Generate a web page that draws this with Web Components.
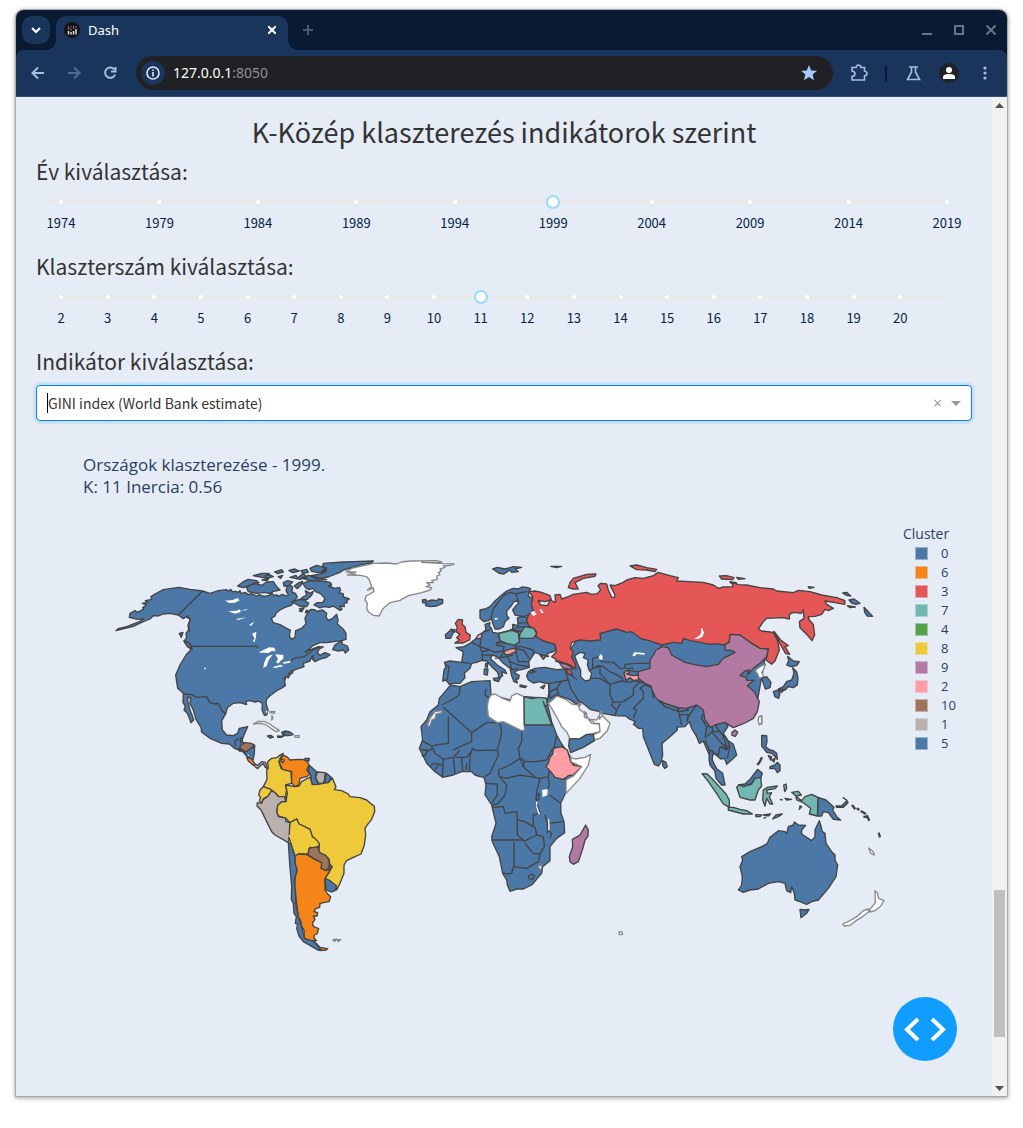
<!DOCTYPE html>
<html lang="hu">
<head>
<meta charset="utf-8">
<meta name="viewport" content="width=device-width, initial-scale=1">
<title>Dash</title>
<style>
  html { background: #fff; }
  body { margin: 0; font-family: "Noto Sans", "Open Sans", sans-serif; }
</style>
</head>
<body>
<browser-window>
  <browser-tabs slot="tabs"></browser-tabs>
  <browser-toolbar slot="toolbar"></browser-toolbar>
  <cluster-page>
    <mark-slider caption="Év kiválasztása:" min="1974" max="2019" value="1999" step="5" last="2019"></mark-slider>
    <mark-slider caption="Klaszterszám kiválasztása:" min="2" max="21" value="11" step="1" last="20"></mark-slider>
    <indicator-picker></indicator-picker>
    <cluster-figure>
      <world-map></world-map>
      <cluster-legend slot="legend"></cluster-legend>
    </cluster-figure>
  </cluster-page>
</browser-window>

<script>
const base = ':host,*{box-sizing:border-box}button{border:0;margin:0;padding:0;background:none;color:inherit;font:inherit;display:grid;place-items:center}svg{display:block}';
function define(name, html, setup) {
  customElements.define(name, class extends HTMLElement {
    constructor() {
      super();
      this.attachShadow({ mode: 'open' }).innerHTML = html.replace('<style>', '<style>' + base);
    }
    connectedCallback() { if (setup && !this.ready) { this.ready = true; setup(this, this.shadowRoot); } }
  });
}

define('browser-window', `<style>
  :host{display:block;padding:10px 16px 32px 16px}
  .frame{display:flex;flex-direction:column;min-height:calc(100vh - 42px);border-radius:8px 8px 0 0;overflow:hidden;background:#0a1a33}
  .shadow{border-radius:8px 8px 0 0;box-shadow:0 0 0 1px #aaa,0 1px 4px 1px #0006}
  .view{display:flex;flex:1;background:#e5ecf6;position:relative}
  .doc{flex:1;min-width:0}
  .bar{width:15px;background:#f1f1f1;display:flex;flex-direction:column;align-items:center}
  .bar button{width:15px;height:16px}
  .before{flex:777}.thumb{flex:147;width:11px;background:#c1c1c1}.after{flex:43}
  .dev{position:absolute;right:50px;bottom:35px;width:64px;height:64px;border-radius:50%;background:#119dff}
</style>
<div class="shadow"><div class="frame"><slot name="tabs"></slot><slot name="toolbar"></slot>
<div class="view"><div class="doc"><slot></slot></div>
<div class="bar"><button aria-label="Fel"><svg width="9" height="5"><path d="M0 5L4.500 0L9 5z" fill="#505050"/></svg></button><div class="before"></div><div class="thumb"></div><div class="after"></div><button aria-label="Le"><svg width="9" height="5"><path d="M0 0L4.500 5L9 0z" fill="#505050"/></svg></button></div>
<button class="dev" aria-label="Fejlesztői eszközök"><svg width="64" height="64" fill="none" stroke="#fff" stroke-width="4"><path d="M25 22L14 32.500L25 43M39 22L50 32.500L39 43"/></svg></button>
</div></div></div>`);

define('browser-tabs', `<style>
  :host{display:flex;height:40px;padding:6px 0 0 6px;color:#fff}
  .search{width:28px;height:28px;border-radius:10px;background:#1a355c}
  .tab{position:relative;display:flex;align-items:center;gap:8px;width:232px;margin-left:6px;padding:0 8px 6px;height:34px;border-radius:10px 10px 0 0;background:#1a355c;font-size:13px;line-height:18px}
  .tab span{flex:1}
  .tab::before,.tab::after{content:"";position:absolute;bottom:0;width:10px;height:10px}
  .tab::before{left:-10px;background:radial-gradient(circle at 0 0,#0000 10px,#1a355c 10px)}
  .tab::after{right:-10px;background:radial-gradient(circle at 100% 0,#0000 10px,#1a355c 10px)}
  .tab button{width:16px;height:16px}
  .new{width:28px;height:28px;margin-left:6px}
  .win{margin-left:auto;display:flex}
  .win button{width:32px;height:28px}
</style>
<button class="search" aria-label="Lapok keresése"><svg width="10" height="8" fill="none" stroke="#fff" stroke-width="2"><path d="M1 2L5 6L9 2"/></svg></button>
<div class="tab"><svg width="16" height="16"><circle cx="8" cy="8" r="8" fill="#111518"/><path d="M4.500 9v3.500M7 10v2.500M9.500 9v3.500M12 7v5.500" stroke="#ddd" stroke-width="1.500"/><path d="M4.500 4v4M7 4v1M9.500 4v1M12 4v2" stroke="#a55a78" stroke-width="1.200"/><path d="M7 6v3M9.500 5v2" stroke="#777"/></svg><span>Dash</span><button aria-label="Lap bezárása"><svg width="8" height="8" stroke="#fff" stroke-width="2"><path d="M0 0L8 8M8 0L0 8"/></svg></button></div>
<button class="new" aria-label="Új lap"><svg width="10" height="10" stroke="#4b5a72" stroke-width="2"><path d="M5 0V10M0 5H10"/></svg></button>
<div class="win"><button aria-label="Kis méret"><svg width="10" height="10" stroke="#6b7485" stroke-width="2"><path d="M0 9H10"/></svg></button><button aria-label="Teljes méret"><svg width="10" height="10" fill="none" stroke="#6b7485" stroke-width="2"><path d="M1 1H9V9H1z"/></svg></button><button aria-label="Bezárás"><svg width="10" height="10" stroke="#6b7485" stroke-width="2"><path d="M.5 .5L9.500 9.500M9.500 .5L.5 9.500"/></svg></button></div>`);

define('browser-toolbar', `<style>
  :host{display:flex;align-items:center;height:47px;background:#1a355c;border-bottom:1px solid #35507a;border-radius:8px 8px 0 0;color:#a8bde0;padding:0 4px}
  button{width:36px;height:34px}
  .off{color:#4f6a94}
  .omni{flex:1;display:flex;align-items:center;height:34px;margin-left:8px;border-radius:17px;background:#202124;padding:0 6px 0 5px;font-size:14px}
  .omni .info{flex:none;width:24px;height:24px;border-radius:50%;background:#1a355c;color:#e3eaf6}
  .omni .star{color:#a8c7fa}
  .url{flex:1;margin-left:8px;line-height:20px;color:#8f9194}
  .url b{font-weight:400;color:#fff}
  .sep{width:2px;height:16px;margin:0 8px;background:#0a1a33}
  .ext{margin-left:8px}
  .avatar{width:20px;height:20px;border-radius:50%;background:#202124;margin:0 8px}
</style>
<button aria-label="Vissza"><svg width="14" height="14" fill="none" stroke="currentColor" stroke-width="2"><path d="M13 7H2M7 1.500L1.500 7L7 12.500"/></svg></button>
<button class="off" aria-label="Előre"><svg width="14" height="14" fill="none" stroke="currentColor" stroke-width="2"><path d="M1 7H12M7 1.500L12.500 7L7 12.500"/></svg></button>
<button aria-label="Újratöltés"><svg width="14" height="14" fill="none" stroke="currentColor" stroke-width="2"><path d="M11.500 3.500A5.200 5.200 0 1 0 12.200 8.500M12.500 1V5.500H8"/></svg></button>
<div class="omni"><button class="info" aria-label="Webhelyadatok"><svg width="14" height="14" fill="none" stroke="currentColor" stroke-width="1.600"><circle cx="7" cy="7" r="6"/><path d="M7 6V10.500M7 3.400V5"/></svg></button>
<div class="url"><b>127.0.0.1</b>:8050</div>
<button class="star" aria-label="Könyvjelző"><svg width="16" height="16" fill="currentColor"><path d="M8 0L10.200 5.400L16 5.800L11.600 9.500L13 15.200L8 12.100L3 15.200L4.400 9.500L0 5.800L5.800 5.400z"/></svg></button></div>
<button class="ext" aria-label="Bővítmények"><svg width="18" height="18" fill="none" stroke="currentColor" stroke-width="1.600"><path d="M2 3.500H6Q6.500 1 8.500 1T11 3.500H14.500V7Q17 7.500 17 9.500T14.500 12V16H2V12.500Q5 12 5 9.700T2 7z"/></svg></button>
<div class="sep"></div>
<button aria-label="Kísérletek"><svg width="15" height="15" fill="none" stroke="currentColor" stroke-width="1.600"><path d="M3 1H12M5.500 1V6L1.500 13.500H13.500L9.500 6V1"/></svg></button>
<button class="avatar" aria-label="Profil"><svg width="14" height="14" fill="#fff"><circle cx="7" cy="4" r="3"/><path d="M1 13V11Q1 8 7 8T13 11V13z"/></svg></button>
<button aria-label="Menü"><svg width="4" height="16" fill="currentColor"><circle cx="2" cy="3" r="1.600"/><circle cx="2" cy="8" r="1.600"/><circle cx="2" cy="13" r="1.600"/></svg></button>`);

define('cluster-page', `<style>
  :host{display:block;padding:14px 20px 20px;color:#333;font-family:"Noto Sans CJK SC",sans-serif}
  h1{margin:0 0 4px;font-size:27px;line-height:42px;font-weight:400;text-align:center}
</style><h1>K-Közép klaszterezés indikátorok szerint</h1><slot></slot>`);

define('mark-slider', `<style>
  :host{display:block;height:95px}
  label{display:block;margin-bottom:4px;font-size:21px;line-height:28px}
  .track{position:relative;height:26px;padding:0 18px}
  .rail{position:absolute;left:14px;right:25px;top:11px;height:4px;border-radius:2px;background:#e9e9e9}
  .dots{position:absolute;left:25px;right:25px;top:11px;display:flex;justify-content:space-between}
  .dots i{width:0;display:flex;justify-content:center}
  .dots i::before{content:"";flex:none;width:4px;height:4px;border-radius:50%;background:#fff}
  .dots i.none::before{background:none}
  input{position:relative;appearance:none;display:block;width:100%;height:26px;margin:0;background:none}
  input::-webkit-slider-runnable-track{height:14px;background:none}
  input::-webkit-slider-thumb{appearance:none;width:14px;height:14px;border-radius:50%;border:2px solid #96dbfa;background:#fff}
  .marks{display:flex;justify-content:space-between;padding:0 25px;font-size:13px;line-height:16px;color:#061e44}
  .marks span{width:0;display:flex;justify-content:center}
</style><label for="range"></label><div class="track"><div class="rail"></div><div class="dots"></div><input id="range" type="range"></div><div class="marks"></div>`,
(el, root) => {
  const get = n => Number(el.getAttribute(n));
  const input = root.querySelector('input');
  root.querySelector('label').textContent = el.getAttribute('caption');
  input.min = get('min'); input.max = get('max'); input.value = get('value');
  for (let v = get('min'); v <= get('max'); v += get('step')) {
    const dot = document.createElement('i'), mark = document.createElement('span');
    if (v <= get('last')) mark.textContent = v; else dot.className = 'none';
    root.querySelector('.dots').append(dot);
    root.querySelector('.marks').append(mark);
  }
});

define('indicator-picker', `<style>
  :host{display:block}
  label{display:block;font-size:21px;line-height:28px;margin-bottom:10px}
  .box{display:flex;align-items:center;height:36px;padding:0 10px;border:1px solid #007eff;border-radius:4px;background:#fff;box-shadow:0 0 0 3px #007eff1a}
  .caret{width:1px;height:20px;background:#000}
  select{appearance:none;flex:1;min-width:0;height:34px;border:0;padding:0;margin:0;background:none;color:#333;font:14px/34px "Noto Sans CJK SC",sans-serif;outline:0}
  button{width:17px;height:20px;margin-right:5px;color:#999;font:16px/20px "Open Sans",sans-serif}
</style><label for="ind">Indikátor kiválasztása:</label>
<div class="box"><span class="caret"></span><select id="ind"><option>GINI index (World Bank estimate)</option></select><button aria-label="Törlés">×</button><svg width="10" height="5"><path d="M0 0H10L5 5z" fill="#999"/></svg></div>`);

define('cluster-figure', `<style>
  :host{display:block;padding:33px 0 0 47px;color:#2a3f5f;font-family:"Open Sans",sans-serif}
  h2{margin:0 0 26px;font-size:17px;line-height:22px;font-weight:400}
  .plot{display:flex;gap:10px;align-items:flex-start}
  .map{flex:1;min-width:0}
</style><h2>Országok klaszterezése - 1999.<br>K: 11 Inercia: 0.56</h2><div class="plot"><div class="map"><slot></slot></div><slot name="legend"></slot></div>`);

define('cluster-legend', `<style>
  :host{display:block;width:69px;font-family:"Open Sans",sans-serif}
  h3{margin:0;font-size:14px;line-height:20px;font-weight:400}
  ul{margin:0;padding:0 0 0 12px;list-style:none;font-size:13px;line-height:19px}
  li{display:flex;align-items:center;gap:13px}
  i{width:13px;height:13px;border:1px solid #e5ecf680}
</style><h3>Cluster</h3><ul></ul>`,
(el, root) => {
  root.querySelector('ul').innerHTML = [[0,'#4c78a8'],[6,'#f58518'],[3,'#e45756'],[7,'#72b7b2'],[4,'#54a24b'],[8,'#eeca3b'],[9,'#b279a2'],[2,'#ff9da6'],[10,'#9d755d'],[1,'#bab0ac'],[5,'#4c78a8']]
    .map(([n, c]) => `<li><i style="background:${c}"></i>${n}</li>`).join('');
});

define('world-map', `<style>
  :host{display:block}
  svg{width:100%;height:auto}
  path{stroke:#444;stroke-width:4;stroke-linejoin:round}
  .b{fill:#4c78a8}.o{fill:#f58518}.r{fill:#e45756}.t{fill:#72b7b2}.g{fill:#54a24b}.y{fill:#eeca3b}.p{fill:#b279a2}.k{fill:#ff9da6}.n{fill:#9d755d}.s{fill:#bab0ac}
  .w{fill:#fff;stroke:#888}.l{fill:none}.m{fill:none;stroke-width:7}.lake{fill:#fff;stroke:none}.sea{fill:#e5ecf6}
</style>
<svg viewBox="249 1572 2430 1320" role="img" aria-label="Országok klaszterei">
<g transform="translate(330 1650)">
<path class="b" d="M207 112L240 118 278 123 300 130 325 122 350 119 356 124 362 118 367 125 376 124 385 127 390 122 393 131 405 127 415 134 423 131 440 138 447 134 462 139 478 136 485 129 492 137 500 134 505 139 517 133 530 138 535 135 528 122 532 108 540 104 548 112 545 126 556 130 562 141 556 148 545 165 525 172 510 180 498 190 495 198 484 205 490 218 510 224 530 235 541 240 538 258 545 268 555 262 557 242 575 235 588 222 585 205 592 190 602 178 613 179 620 184 638 180 650 190 648 202 656 211 668 205 680 193 684 210 682 222 700 238 708 250 708 268 695 272 650 278 630 278 610 286 600 295 585 307 602 299 625 290 640 291 628 297 622 308 630 316 645 308 660 314 650 322 628 328 615 335 607 327 611 317 605 320 600 333 580 340 582 350 565 356 550 361 548 368 540 374 535 384 528 378 524 394 526 407 516 414 500 422 480 437 470 447 468 460 474 480 470 495 463 496 456 480 457 460 445 453 435 456 420 452 408 454 410 464 390 458 370 460 352 473 347 492 335 512 337 540 350 555 370 557 383 550 388 535 413 530 405 548 400 560 395 576 410 581 430 583 433 595 430 610 424 624 408 614 397 603 375 596 358 582 335 580 300 565 275 547 273 532 258 508 250 480 240 460 242 444 232 442 234 455 240 480 247 498 251 510 243 518 237 502 232 490 222 480 226 468 219 458 220 430 203 415 197 375 210 345 228 315 242 300 240 291 228 282 222 275 230 262 228 250 236 240 234 225 241 208 228 200 220 206 205 195 180 190 160 192 145 198 130 197 120 207 105 213 70 229 18 242 24 236 50 230 90 214 101 206 82 208 58 202 60 190 75 182 82 187 100 178 98 173 110 165 97 160 113 157 106 152 125 148 123 140 135 132 160 119z"/>
<path class="l" d="M278 123L205 195M245 289H438M438 289L445 292M540 337L550 325 582 320 606 302 630 290M220 432L245 434 260 442 290 440 300 458 315 462 325 460 335 480 347 492M232 196L240 208 236 230 240 245M387 566L375 572 376 590M397 603L408 614M223 272L238 280 246 295M520 387L528 382M533 375L548 360"/>
<path class="b" d="M383 108L400 95 415 88 440 92 447 98 425 104 400 113zM410 113L432 99 455 106 470 96 490 95 500 110 510 120 490 124 480 131 465 127 440 130 415 125zM430 77L455 70 477 70 465 78 478 74 490 80 472 84 455 82zM494 66L515 59 520 66 503 71zM456 90L477 85 470 92zM537 61L555 57 568 63 548 68zM573 62L590 58 595 67 578 70zM540 82L558 76 563 84 580 70 590 82 570 88zM505 80L518 76 512 85zM520 98L533 92 548 96 535 108 522 108zM567 98L578 94 573 105 562 116 553 108zM575 84L595 76 650 89 600 92zM600 55L620 46 634 50 650 54 637 62 650 65 625 68 605 64zM637 51L640 40 700 36 730 35 790 33 785 39 755 44 725 53 700 60 690 67 655 81 620 86 600 78 640 70 637 62 650 59zM578 100L600 92 650 95 662 98 665 105 655 108 675 115 688 112 692 120 687 128 700 132 700 141 718 147 710 152 712 158 702 160 703 170 690 168 696 178 690 181 670 168 658 172 640 170 630 174 612 165 620 158 638 158 645 146 633 132 617 125 608 115 597 119 587 114zM545 156L562 150 578 146 596 160 590 170 568 168 560 163zM586 122L600 130 610 124 605 136 592 148 568 150 580 140 590 136zM575 178L568 183 576 185zM590 180L597 184 586 188zM568 176L583 173 578 180zM668 299L675 285 695 272 697 282 712 288 716 300 706 309 700 300 685 303zM208 250L219 247 214 262zM222 272L238 279 246 298 232 290z"/>
<path class="lake" d="M345 152L368 150 382 144 389 151 375 158 358 159zM355 184L380 182 390 178 392 186 375 191zM392 182L414 176 408 181zM378 207L410 202 385 210zM417 225L434 214 424 227zM426 252L439 245 438 260 434 276 428 274 434 265zM446 307L460 300 478 292 493 293 497 304 485 303 475 309 455 308zM488 314L476 330 470 348 460 354 462 340 470 322 480 316zM496 313L520 315 520 326 512 332 506 340 498 338 504 327zM487 352L512 344 520 349 495 354zM518 337L543 332 540 338 522 341zM283 353h5v5h-5zM468 482h4v6h-4z"/>
<path class="w" d="M430 522L445 514 465 515 480 522 490 530 508 542 498 545 483 535 468 524 450 520zM480 484L495 485 492 490 480 488zM486 497L485 510 489 504zM555 557L568 557 567 562 555 562z"/>
<path class="b" d="M472 558L482 556 490 561 480 564zM503 558L520 559 515 547 526 543 540 546 550 554 535 557 523 556 515 562 503 562zM523 544L526 557"/>
</g>
<g transform="translate(750 1650)">
<path class="w" d="M288 65L298 60 305 55 340 47 355 44 370 40 410 39 440 42 455 36 480 33 560 32 575 36 560 38 515 37 580 41 612 42 600 46 580 48 585 52 570 57 575 62 565 68 570 74 560 78 562 88 545 92 550 98 530 98 540 105 528 110 545 113 540 120 515 128 475 137 450 151 420 158 405 170 395 182 388 198 370 196 355 185 350 175 352 160 345 150 348 138 360 132 372 124 370 114 352 120 365 110 358 90 350 80 330 76 292 75 318 73 294 68 318 66z"/>
<path class="b" d="M517 150L527 148 530 155 545 150 560 152 566 147 578 149 578 160 560 168 540 170 527 167 528 160 518 158z"/>
</g>
<g transform="translate(675 2070)">
<path class="g" d="M47 145L52 142 52 152 46 158zM38 177L50 181 45 185z"/>
<path class="n" d="M48 165L60 158 78 160 89 166 75 178 60 186 52 178 44 175z"/>
<path class="b" d="M89 167L88 190 84 210 76 206 65 198 56 187 66 184 75 177z"/><path class="o" d="M65 201L80 207 90 222 85 226 70 213z"/>
<path class="s" d="M90 222L98 226 110 215 122 217 127 235 121 232 115 221 105 228 98 236 86 226z"/>
<path class="y" d="M128 215L140 205 155 203 165 195 175 190 166 203 162 215 168 235 198 245 200 280 182 285 185 300 182 315 183 333 160 318 140 300 115 290 126 268 125 240 130 235z"/>
<path class="y" d="M115 290L138 298 140 305 128 320 115 326 110 340 103 332 107 322 101 315 105 300z"/>
<path class="o" d="M166 208L175 195 188 202 195 210 220 208 243 209 252 225 245 240 255 252 245 260 225 265 222 285 208 290 200 278 200 245 172 238 162 215z"/>
<path class="s" d="M170 207L177 210 174 218 168 214z"/><path class="b" d="M240 205L253 205 252 213 240 212zM252 225L275 245 271 262 280 283 264 284 257 275 259 260 250 242z"/>
<path class="s" d="M278 246L300 248 299 268 295 280 280 279 272 262z"/><path class="b" d="M303 249L319 262 310 278 299 278z"/>
<path class="y" d="M182 285L208 290 222 288 230 275 255 261 262 284 280 283 295 280 310 278 322 264 333 290 328 299 350 302 370 312 375 320 405 323 425 330 440 343 448 348 449 365 440 388 425 407 420 415 422 435 418 465 408 492 385 502 365 512 357 525 357 550 345 580 335 600 328 585 315 575 300 566 310 550 320 532 314 520 312 508 300 496 286 490 282 482 283 462 270 458 262 440 255 418 235 408 222 402 215 387 195 398 182 385 160 378 155 365 158 345 170 335 183 335 187 310z"/>
<path class="s" d="M140 302L150 308 160 320 178 320 183 335 170 335 158 345 155 365 160 380 182 384 182 394 195 398 197 420 190 458 150 435 140 425 125 395 108 360 96 348 97 338 110 340 115 328 128 320z"/>
<path class="y" d="M195 398L215 387 222 402 235 408 255 418 262 440 270 445 283 460 280 475 255 472 248 492 220 492 210 498 203 478 196 455 192 442z"/>
<path class="o" d="M220 492L245 494 265 505 290 518 290 535 312 540 316 526 322 530 300 565 300 600 308 612 317 620 312 635 285 640 284 652 272 656 267 665 278 668 276 678 265 678 270 688 262 700 266 710 281 716 276 732 268 735 267 744 275 752 250 752 238 745 237 720 230 710 228 695 220 680 215 640 208 590 211 560 216 540 210 520 210 498z"/>
<path class="n" d="M252 475L278 470 284 488 302 496 312 510 313 530 304 542 288 535 290 518 265 505 250 495z"/>
<path class="b" d="M190 458L198 462 203 480 210 500 210 520 216 540 208 570 212 610 212 640 220 680 230 710 238 745 268 755 290 782 278 780 255 766 235 755 222 738 215 715 218 702 211 700 214 680 207 670 205 640 199 628 200 590 194 520z"/>
<path class="b" d="M300 565L315 572 335 588 330 602 318 606 303 600z"/><path class="o" d="M268 754L285 772 308 776 302 781 288 780z"/>
<path class="w" d="M323 750L334 747 330 754zM336 749L347 749 340 755z"/>
<path class="lake" d="M189 434L197 438 194 442zM68 193L73 198 69 198z"/>
</g>
<g transform="translate(1770 1665)">
<path class="b" d="M-185 350L-165 340 -135 337 -100 344 -72 342 -60 335 -95 318 -50 320 -60 285 -40 255 0 250 80 215 215 260 420 235 530 282 500 450 430 515 405 502 414 515 400 535 412 555 430 568 440 600 428 612 410 628 404 610 392 612 372 595 365 603 370 630 360 630 358 600 345 570 340 558 328 565 320 545 305 520 298 500 285 515 262 516 262 525 240 545 222 560 216 566 218 600 213 622 205 633 193 628 178 590 160 545 158 520 145 520 130 508 136 500 115 490 108 483 75 482 38 475 22 468 0 463 -12 452 -28 440 -40 448 -60 434 -100 420 -112 443 -127 448 -128 440 -123 410 -123 385 -137 384 -150 380 -170 384 -185 375 -190 362z"/>
<path class="l" d="M-123 385L-65 375M-125 383L-120 430M-65 375L-58 400 -48 415 -30 445M-123 412L-100 400 -85 378M-120 430L-95 415 -100 400M-65 375L-75 345M-65 355L-38 375M-5 370L30 370 60 388 60 420 70 442 65 450 80 465 75 482M60 388L95 378 120 382 130 378 150 380 185 395M60 388L30 355 30 335 8 340 8 310 28 305 35 320 70 322 90 340 105 340 105 328 140 325 180 325M0 345L25 332 40 335 60 350 85 362 100 372M70 442L100 440 130 420 130 400 150 380M80 465L92 445M130 490L140 465 130 460 160 430 160 410 150 400 165 390 185 398 190 430M205 436L225 455 265 470 262 458 225 445zM265 458L268 480 295 478 290 500M268 480L275 510M290 500L298 480 320 450M340 475L335 490 350 515 345 550M268 470L295 465 288 460M350 515L365 515 370 530 390 530 400 545 412 580 390 575 385 600 360 590 345 555M365 515L375 505M375 508L385 525 410 550 420 575 412 610M350 545L365 530 390 560 412 580M390 575L410 585 418 570M110 340L130 340M112 345L135 350 145 350"/>
<path class="k" d="M102 354L112 346 118 352 110 357 128 362 145 360 151 374 130 376 120 368 108 376z"/>
<path class="lake" d="M127 302L133 292 165 294 163 299 140 297 134 304zM26 305L33 297 38 305 37 315 28 313z"/>
<path class="sea" d="M-46 302L-30 292 -14 296 -20 308 -5 315 -8 328 -3 345 5 355 0 375 -15 378 -28 365 -28 345 -38 325z"/>
</g>
<g transform="translate(1230 1665)">
<path class="b" d="M210 165L225 162 240 155 255 138 275 120 290 108 310 100 325 102 335 96 350 97 362 101 357 110 355 125 368 128 365 150 372 165 362 178 340 185 315 180 308 165 318 152 326 145 322 138 312 140 302 155 290 168 290 180 297 190 285 200 280 215 268 222 255 222 248 205 244 188 238 196 222 200 210 190zM322 190L330 185 352 187 352 200 358 214 345 220 340 230 322 228 308 220 308 208 325 212zM228 225L225 208 240 203 238 212 245 222 248 232 265 235 305 225 330 235 380 235 380 245 400 258 425 263 437 268 435 288 410 296 415 305 395 300 375 292 368 302 360 315 356 320 358 337 338 343 325 345 312 352 328 362 325 372 318 370 322 384 312 380 305 362 300 340 280 325 262 305 246 300 242 312 262 330 285 345 290 356 275 350 278 362 268 370 262 350 245 335 230 318 215 316 200 322 185 325 180 340 163 355 165 368 150 385 125 385 118 388 108 375 98 378 102 345 108 335 103 322 120 318 155 322 160 290 150 285 138 278 162 275 180 265 205 245 215 235zM106 240L125 222 130 232 122 250 108 250zM250 370L272 367 265 380 252 376zM223 342L234 342 232 360 222 358zM227 325L233 325 232 337 226 335zM330 390L350 394 345 398 330 395zM392 397L405 390 400 401zM248 42L262 37 285 42 310 35 335 37 315 42 325 50 305 52 300 45 282 57 268 55z"/>
<path class="l" d="M244 188L248 165 262 145 280 122 300 112 318 117 335 112 352 110M318 117L326 142M108 330L117 335 112 375M155 322L180 325M185 262L210 275 215 290 218 315M210 275L240 285 255 292 280 288 282 275 258 270 270 258 265 235M215 290L240 285M218 300L245 300M212 252L210 275M258 262L290 265 315 270 320 282 340 285 358 310M315 275L335 275 370 285 370 300M282 290L270 308M290 300L300 320 305 345M318 290L325 320 358 320M300 320L325 330 355 335M305 345L325 340M325 250L330 262M322 205L350 203M318 218L345 215M222 230L240 225M255 310L290 305 310 300M435 318L480 330M360 345L378 350 358 355"/>
<path class="r" d="M357 110L375 108 395 112 420 122 424 134 405 140 385 136 392 150 412 152 420 135 437 142 435 120 450 118 455 132 475 125 490 118 530 112 545 118 562 116 572 105 564 92 572 85 590 87 595 105 605 127 612 128 615 120 605 100 600 90 615 92 640 82 650 75 675 68 700 70 730 62 745 52 780 62 805 68 800 78 840 80 880 82 910 90 925 100 940 96 970 95 965 82 985 89 1010 90 1050 98 1090 102 1100 108 1150 113 1165 106 1200 110 1235 120 1280 128 1305 137 1304 148 1275 143 1245 138 1250 148 1270 160 1255 167 1245 163 1235 178 1215 184 1195 185 1198 195 1210 208 1214 240 1206 257 1192 240 1170 218 1168 200 1182 190 1180 165 1174 175 1150 172 1138 178 1138 192 1118 188 1070 190 1060 200 1045 222 1055 228 1090 232 1102 255 1108 285 1095 318 1085 328 1068 315 1075 282 1050 280 1020 262 990 240 960 238 958 262 940 270 920 266 900 268 870 262 840 257 820 250 815 265 790 262 755 270 715 256 695 252 665 230 650 232 620 222 570 235 572 255 540 258 510 255 485 262 480 280 490 290 485 305 495 325 498 342 480 330 445 318 425 305 440 290 435 268 400 258 378 245 380 230 355 210 350 195 355 180 370 165 364 150 368 125zM475 98L480 82 490 70 530 58 558 57 555 64 520 70 495 83 505 102 490 102zM660 33L680 30 710 38 740 43 735 50 710 45 680 44zM928 63L950 62 972 68 968 74 935 72zM960 80L975 82 980 84 962 84zM980 67L1005 71 985 73zM1195 95L1212 97 1198 100zM1092 229L1112 255 1135 272 1125 275 1139 298 1127 296 1112 270zM136 205L145 193 158 195 156 208 165 215 168 232 181 240 179 255 160 264 134 264 148 255 140 248 150 238 138 230 142 218zM125 225L135 223 133 232zM302 223L318 224 317 229 303 229zM390 300L408 303 400 313zM468 345L480 343 488 360 475 357zM422 34L455 34 440 38z"/>
<path class="t" d="M266 235L305 226 325 233 328 260 315 271 290 265 270 257zM345 215L372 220 380 236 370 250 328 250 330 236z"/>
<path class="k" d="M281 290L300 282 316 280 318 290 297 299 285 298zM204 240L217 235 213 252 198 250z"/>
<path class="p" d="M448 323L470 328 490 340 480 343 458 338z"/>
<path class="lake" d="M361 172L372 168 380 178 370 183zM388 163L393 162 401 173 395 175zM253 190L264 188 262 193 256 195zM873 219L877 220 882 234 877 245 864 252 852 252 866 244 874 234z"/>
<path class="p" d="M755 275L775 278 785 300 825 322 850 328 890 335 925 328 940 310 975 292 965 286 945 285 945 268 958 262 960 238 990 240 1020 262 1050 280 1075 282 1070 305 1050 325 1030 340 1012 360 1018 345 1005 348 990 362 1010 368 1010 376 1032 376 1012 392 1035 412 1040 425 1048 440 1042 470 1030 490 1005 504 970 518 945 502 915 510 902 517 885 495 880 465 860 450 830 460 805 458 765 445 740 432 728 410 723 393 705 385 685 370 685 350 720 340 720 315 730 300 738 285 748 280z"/>
<path class="p" d="M966 532L975 525 983 532 976 544 966 541z"/>
<path class="w" d="M1035 347L1050 335 1067 327 1060 345 1055 352 1062 365 1048 370 1042 355zM1048 485L1056 483 1055 508 1046 500z"/>
<path class="b" d="M1055 370L1070 365 1083 382 1080 398 1066 402zM1133 304L1150 318 1168 320 1160 332 1142 335 1130 330 1136 318zM1148 338L1160 350 1164 370 1162 390 1150 398 1135 395 1125 405 1105 402 1120 395 1130 380 1145 375 1152 355zM1090 410L1105 405 1110 415 1106 430 1095 425zM1108 405L1125 403 1115 412zM1298 114L1310 112 1322 123 1310 121zM1317 135L1332 132 1350 145 1338 148 1325 144zM1312 152L1336 156 1320 158zM1362 157L1375 170 1388 184 1372 183 1364 172zM758 617L768 622 772 635 764 640 758 632z"/>
</g>
<g transform="translate(1230 2010)">
<path class="b" d="M122 45L150 50 185 35 240 32 243 75 300 90 345 80 410 85 412 100 425 155 440 195 455 222 478 255 482 262 500 300 467 368 452 400 453 430 462 455 464 488 440 505 420 530 420 572 398 590 395 610 365 645 340 657 320 657 300 664 292 645 290 630 278 610 268 560 247 515 245 500 258 460 245 405 225 375 228 345 222 322 210 320 195 315 185 305 155 305 130 315 98 322 75 305 50 280 38 255 28 235 38 210 33 170 50 150 60 125 85 105 88 85 105 65z"/>
<path class="l" d="M150 50L148 75 125 90 95 105M100 112L185 188 230 158 270 158M115 140V220L75 225 68 230 35 212M185 188V215L150 230 130 240M228 55L225 75 240 85M270 158L275 190 262 240 265 255 240 310 225 320M343 165V182H335V215L325 235 330 265 300 285 265 300M187 235L200 242 262 240M187 235L180 260 178 303M335 265L345 275 375 275 410 270 425 240 440 230M330 265L345 295 375 322M265 300L268 320 290 325 330 315 360 320 390 325 415 320 420 290M440 195L432 235M390 325L385 345 380 365M415 320L418 345 412 360M418 375L450 398M380 365L378 395 390 430 370 435 370 470 345 455 322 450 320 425 285 430 280 410 248 412M245 510H340L322 495V450M340 515L380 495 375 470M380 495L400 500 403 530 390 552 370 550 345 520M390 552L385 575 350 595 310 590 305 610 290 612 280 608M312 590V515M405 435L412 460 460 455M412 460L412 490M35 240H50L48 255 35 258M50 245L68 235 75 250 100 268 130 262 150 240M130 262L135 312M155 262L158 303M170 280L168 300M135 262L170 262 187 240M100 268L97 320M60 290L72 280 100 285M75 300L85 285M228 340L262 342 262 375 245 400M268 320L290 345 285 375 265 400 248 405M455 325L468 330 468 370M355 618L365 612 373 618 368 628 358 627zM380 378L387 370 387 388 378 392M412 480L425 490 420 505M345 275L335 290"/>
<path class="w" d="M243 75L255 72 278 85 300 93 305 78 320 70 342 80 343 182 335 182 280 155 262 158 235 140 232 110 235 90z"/>
<path class="t" d="M342 80L365 86 385 82 410 85 412 105 405 110 400 95 412 130 425 165H343z"/>
<path class="k" d="M430 235L455 230 472 240 478 260 482 275 490 285 515 290 490 315 475 317 460 328 435 322 422 305 408 290 416 278 420 262 428 252z"/>
<path class="w" d="M482 262L495 267 525 262 542 253 535 285 510 325 468 370 468 330 490 318 515 290 484 276zM75 125L95 122 95 128 78 132 75 145 65 150 60 168 52 168 60 145zM386 588L394 585 395 597 387 597zM415 100L425 92 440 78 470 90 485 102 505 105 510 120 525 130 535 145 555 160 568 160 570 185 530 195 515 205 480 207 470 185 455 170 445 150 425 115zM535 148L560 150 573 128 580 140 590 150 600 160 592 182 570 205 552 210 548 196 570 185 567 162 545 160zM570 125L575 125 577 137 568 148zM505 98L513 103 508 108zM523 125L530 130 528 145 523 140z"/>
<path class="b" d="M478 207L510 206 530 193 550 194 553 212 520 232 482 248 476 228z"/>
<path class="p" d="M527 465L535 480 534 498 525 510 520 530 505 575 490 583 480 575 478 560 488 530 487 508 510 495z"/>
<path class="lake" d="M396 360L413 357 412 375 398 382zM377 392L383 398 380 405 390 432 386 434 379 412zM414 445L418 450 419 478 415 483zM434 250h5v5h-5z"/>
</g>
<g transform="translate(2070 2100)">
<path class="b" d="M60 150L70 155 66 180 80 206 98 220 105 255 95 255 78 235 74 212 62 198 57 180zM145 255L165 252 180 238 190 225 203 208 217 220 212 235 195 235 185 250 165 260 145 262zM215 106L230 107 231 125 227 140 240 150 250 152 260 160 262 178 254 168 245 160 230 157 215 138zM235 167L245 170 242 180zM245 180L255 175 252 186zM240 200L255 195 262 187 270 195 270 212 262 218 255 205 240 206zM384 292L408 300 432 322 428 330 440 350 452 360 430 358 415 338 400 335 395 348 382 348zM438 318L455 318 470 303 474 308 460 322 440 322zM458 292L470 300 474 308M328 328L335 320 330 318zM330 628L345 630 357 628 350 640 333 653z"/>
<path class="m" d="M216 172L209 186 202 195M486 315L496 328M500 325L508 330M512 333L528 342M530 345L538 362M520 350L535 352M566 398L570 412"/>
<path class="b" d="M388 362L392 375 397 395 405 400 408 430 425 455 435 465 435 480 443 495 438 530 415 565 385 600 365 605 350 613 330 605 315 600 313 580 305 560 302 578 290 572 285 550 265 545 235 550 205 567 180 570 160 577 145 570 155 555 157 530 150 500 158 480 155 470 180 455 215 440 232 430 240 412 265 392 285 395 290 400 295 380 310 375 313 366 325 375 347 376 335 390 335 402 365 422 375 410 375 390z"/>
<path class="t" d="M36 221L52 222 70 240 90 262 108 282 118 300 118 322 100 312 78 278 55 245zM115 322L130 322 150 328 170 332 187 342 160 342 115 330zM140 262L148 255 160 260 185 252 195 235 212 232 215 258 205 270 195 300 180 300 150 292zM220 270L232 262 262 258 255 266 230 270 232 280 245 278 238 290 248 312 240 312 230 295 225 318 218 300zM281 255L288 252 290 265 284 275zM305 277L325 274 334 285 318 288zM318 290L335 302 345 290 365 283 384 292 382 348 358 342 362 325 340 308 320 300zM270 298L278 300M285 295L305 298 290 300zM197 344L215 345 210 350 198 350zM220 345L242 342 235 348zM220 355L228 352M248 357L258 345 277 342 265 350z"/>
<path class="w" d="M207 50L214 48 215 68 208 75 204 62zM536 444L550 455 553 465 542 460zM555 572L562 578 566 595 582 602 572 618 555 632 540 636 540 628 556 608zM458 672L480 662 500 650 520 632 535 627 536 635 515 652 498 662 480 676 462 678z"/>
</g>
<path class="w" d="M1857 2796L1866 2796 1868 2803 1858 2804z"/>
</svg>`);
</script>
</body>
</html>
